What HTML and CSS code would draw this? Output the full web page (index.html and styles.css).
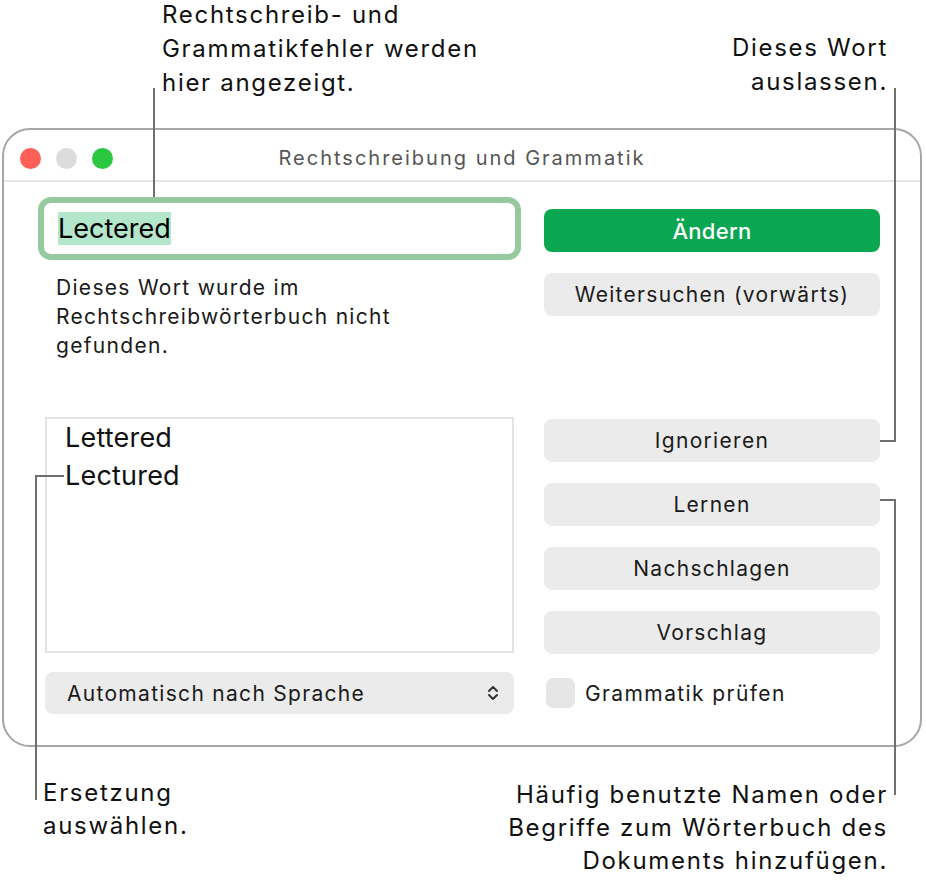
FILE: index.html
```html
<!DOCTYPE html>
<html lang="de">
<head>
    <meta charset="UTF-8">
    <meta name="viewport" content="width=device-width, initial-scale=1.0">
    <title>Rechtschreibung und Grammatik</title>
    <link rel="stylesheet" href="styles.css">
</head>
<body>

<div class="page">

    <div class="window">
        <div class="titlebar">
            <div class="lights">
                <span class="light red"></span>
                <span class="light gray"></span>
                <span class="light green"></span>
            </div>
            <div class="title">Rechtschreibung und Grammatik</div>
        </div>

        <div class="content">
            <div class="col-left">
                <div class="word-field">
                    <span class="selected">Lectered</span>
                </div>
                <p class="desc">Dieses Wort wurde im<br>Rechtschreibwörterbuch nicht<br>gefunden.</p>
                <ul class="guesses">
                    <li>Lettered</li>
                    <li>Lectured</li>
                </ul>
                <div class="popup">
                    <span>Automatisch nach Sprache</span>
                    <svg class="chevrons" width="14" height="18" viewBox="0 0 14 18">
                        <path d="M3 7 L7 3 L11 7 M3 11 L7 15 L11 11" fill="none" stroke="#333" stroke-width="2" stroke-linecap="round" stroke-linejoin="round"/>
                    </svg>
                </div>
            </div>

            <div class="col-right">
                <button class="btn primary">Ändern</button>
                <button class="btn">Weitersuchen (vorwärts)</button>
                <button class="btn btn-ignore">Ignorieren</button>
                <button class="btn">Lernen</button>
                <button class="btn">Nachschlagen</button>
                <button class="btn">Vorschlag</button>
                <label class="check">
                    <span class="box"></span>
                    Grammatik prüfen
                </label>
            </div>
        </div>
    </div>

    <!-- callouts -->
    <div class="callout c-top">Rechtschreib- und<br>Grammatikfehler werden<br>hier angezeigt.</div>
    <div class="callout c-top-right">Dieses Wort<br>auslassen.</div>
    <div class="callout c-bottom-left">Ersetzung<br>auswählen.</div>
    <div class="callout c-bottom-right">Häufig benutzte Namen oder<br>Begriffe zum Wörterbuch des<br>Dokuments hinzufügen.</div>

    <svg class="leaders" width="926" height="881" viewBox="0 0 926 881">
        <g fill="none" stroke="#6f6f6f" stroke-width="2">
            <path d="M154 88 V197"/>
            <path d="M895 88 V441 H880"/>
            <path d="M880 500 H895 V795"/>
            <path d="M64 476 H36 V800"/>
        </g>
    </svg>
</div>

</body>
</html>
```

FILE: styles.css
```css
body {
    margin: 0;
    background-color: #fff;
    font-family: Inter, "Noto Sans", sans-serif;
    color: #1a1a1a;
}
.page {
    position: relative;
    width: 926px;
    height: 881px;
    overflow: hidden;
}
.window {
    margin: 128px 0 0 2px;
    width: 920px;
    height: 619px;
    box-sizing: border-box;
    border: 2px solid #a6a6a6;
    border-radius: 28px;
    background-color: #fff;
}
.titlebar {
    height: 50px;
    border-bottom: 2px solid #e6e6e6;
    display: grid;
    grid-template-areas: "bar";
    align-items: center;
}
.lights {
    grid-area: bar;
    justify-self: start;
    display: flex;
    gap: 15px;
    padding-left: 16px;
    padding-top: 6px;
}
.light {
    width: 21px;
    height: 21px;
    border-radius: 50%;
}
.red { background-color: #fe5f57; }
.gray { background-color: #dcdcdc; }
.green { background-color: #2ac840; }
.title {
    grid-area: bar;
    justify-self: center;
    font-size: 20px;
    letter-spacing: 2px;
    color: #555;
    padding-top: 6px;
}
.content {
    display: flex;
    gap: 23px;
    padding: 15px 0 0 34px;
}
.col-left {
    width: 483px;
    display: flex;
    flex-direction: column;
}
.word-field {
    height: 63px;
    box-sizing: border-box;
    border: 6px solid #97c99e;
    border-radius: 13px;
    display: flex;
    align-items: center;
    padding-left: 14px;
    font-size: 27px;
    color: #000;
}
.selected {
    background-color: #b3e6cb;
    line-height: 33px;
}
.desc {
    margin: 13px 0 0 18px;
    font-size: 21px;
    letter-spacing: 1.3px;
    line-height: 29px;
}
.guesses {
    list-style: none;
    margin: 57px 7px 0 7px;
    padding: 0 0 0 18px;
    height: 236px;
    box-sizing: border-box;
    border: 2px solid #e3e3e3;
    font-size: 27px;
    letter-spacing: 0.2px;
    line-height: 38px;
    color: #111;
}
.popup {
    margin: 19px 7px 0 7px;
    height: 42px;
    box-sizing: border-box;
    background-color: #ebebeb;
    border-radius: 8px;
    display: flex;
    align-items: center;
    justify-content: space-between;
    padding: 0 14px 0 22px;
    font-size: 21px;
    letter-spacing: 1.3px;
}
.col-right {
    width: 336px;
    display: flex;
    flex-direction: column;
    padding-top: 12px;
}
.btn {
    height: 43px;
    margin-bottom: 21px;
    border: none;
    border-radius: 8px;
    background-color: #ebebeb;
    font-family: inherit;
    font-size: 21px;
    letter-spacing: 1.3px;
    color: #1a1a1a;
}
.primary {
    background-color: #0aa651;
    color: #fff;
    font-size: 22px;
    font-weight: 500;
    letter-spacing: 0.3px;
}
.btn-ignore {
    margin-top: 82px;
}
.check {
    display: flex;
    align-items: center;
    gap: 10px;
    margin-top: 3px;
    padding-left: 2px;
    font-size: 21px;
    letter-spacing: 1.4px;
}
.box {
    width: 29px;
    height: 30px;
    border-radius: 7px;
    background-color: #e6e6e6;
}
.callout {
    position: absolute;
    font-size: 24px;
    letter-spacing: 1.7px;
    line-height: 34px;
    color: #111;
}
.c-top {
    left: 162px;
    top: -2px;
}
.c-top-right {
    right: 38px;
    top: 31px;
    text-align: right;
}
.c-bottom-left {
    left: 43px;
    top: 776px;
    line-height: 33px;
}
.c-bottom-right {
    right: 38px;
    top: 778px;
    line-height: 33px;
    text-align: right;
}
.leaders {
    position: absolute;
    left: 0;
    top: 0;
    pointer-events: none;
}
```
